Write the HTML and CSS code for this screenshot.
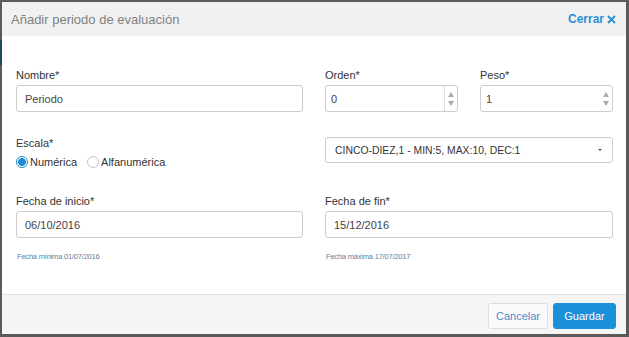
FILE: index.html
```html
<!DOCTYPE html>
<html lang="es">
<head>
<meta charset="utf-8">
<title>Añadir periodo de evaluación</title>
<link rel="stylesheet" href="styles.css">
</head>
<body>
<div class="modal">
  <div class="modal-header">
    <span class="modal-title">Añadir periodo de evaluación</span>
    <span class="close">Cerrar<svg class="close-x" width="9" height="9" viewBox="0 0 9 9"><path d="M1 1L8 8M8 1L1 8" stroke="#2b90d6" stroke-width="2" stroke-linecap="butt"/></svg></span>
  </div>
  <div class="modal-body">
    <div class="row">
      <div class="field wide">
        <label class="lbl">Nombre*</label>
        <div class="input">Periodo</div>
      </div>
      <div class="field narrow">
        <label class="lbl">Orden*</label>
        <div class="input num">0
          <span class="spin sep"><span class="up"></span><span class="down"></span></span>
        </div>
      </div>
      <div class="field narrow">
        <label class="lbl">Peso*</label>
        <div class="input num">1
          <span class="spin"><span class="up"></span><span class="down"></span></span>
        </div>
      </div>
    </div>
    <div class="row row2">
      <div class="field wide">
        <label class="lbl">Escala*</label>
        <div class="radios">
          <span class="radio checked"></span><span class="rlabel">Numérica</span>
          <span class="radio"></span><span class="rlabel">Alfanumérica</span>
        </div>
      </div>
      <div class="field double">
        <div class="input select">CINCO-DIEZ,1 - MIN:5, MAX:10, DEC:1<span class="caret"></span></div>
      </div>
    </div>
    <div class="row row3">
      <div class="field wide">
        <label class="lbl">Fecha de inicio*</label>
        <div class="input">06/10/2016</div>
        <div class="help">Fecha mínima 01/07/2016</div>
      </div>
      <div class="field double">
        <label class="lbl">Fecha de fin*</label>
        <div class="input">15/12/2016</div>
        <div class="help">Fecha máxima 17/07/2017</div>
      </div>
    </div>
  </div>
  <div class="modal-footer">
    <button class="btn btn-default">Cancelar</button>
    <button class="btn btn-primary">Guardar</button>
  </div>
</div>
</body>
</html>
```
FILE: styles.css
```css
html, body {
  margin: 0;
  padding: 0;
}
body {
  width: 629px;
  height: 337px;
  overflow: hidden;
  background: linear-gradient(#1d4a5c, #1d4a5c) 0 40px / 2px 25px no-repeat, #5a5a5a;
  font-family: "Liberation Sans", Arial, sans-serif;
  padding-top: 2px;
  box-sizing: border-box;
}
.modal {
  margin-left: 2px;
  width: 624px;
  height: 332px;
  background: #fff;
  display: flex;
  flex-direction: column;
}
.modal-header {
  height: 34px;
  background: #f1f1f1;
  display: flex;
  align-items: center;
  justify-content: space-between;
  padding: 0 10px 0 9px;
}
.modal-title {
  font-family: "Liberation Sans Narrow", "Liberation Sans", sans-serif;
  font-size: 13px;
  color: #7f7f84;
}
.close {
  font-size: 12px;
  font-weight: bold;
  color: #2b90d6;
  display: flex;
  align-items: center;
}
.close-x {
  margin-left: 3px;
  margin-top: 1px;
}
.modal-body {
  flex: 1;
  padding: 33px 13px 0 14px;
}
.row {
  display: flex;
  align-items: flex-start;
  column-gap: 22px;
}
.row2 { margin-top: 25px; }
.row3 { margin-top: 26px; }
.wide { width: 287px; }
.narrow { width: 133px; }
.double { width: 288px; }
.lbl {
  display: block;
  font-size: 11px;
  line-height: 13px;
  color: #333;
  margin-bottom: 3px;
}
.input {
  position: relative;
  box-sizing: border-box;
  height: 27px;
  border: 1px solid #ccc;
  border-radius: 3px;
  font-size: 11px;
  color: #444;
  padding-left: 8px;
  display: flex;
  align-items: center;
}
.num { padding-left: 5px; }
.select {
  height: 26px;
  color: #333;
  padding-left: 9px;
  font-size: 10.4px;
}
.caret {
  position: absolute;
  right: 10px;
  top: 11px;
  border-left: 2px solid transparent;
  border-right: 2px solid transparent;
  border-top: 2px solid #555;
}
.spin {
  position: absolute;
  right: 0;
  top: 0;
  bottom: 0;
  width: 12px;
  display: flex;
  flex-direction: column;
  align-items: center;
  justify-content: center;
  gap: 4px;
}
.spin.sep {
  border-left: 1px solid #ddd;
}
.up {
  border-left: 3px solid transparent;
  border-right: 3px solid transparent;
  border-bottom: 5px solid #a3acb4;
}
.down {
  border-left: 3px solid transparent;
  border-right: 3px solid transparent;
  border-top: 5px solid #a3acb4;
}
.radios {
  margin-top: 5px;
  height: 14px;
  display: flex;
  align-items: center;
  font-size: 11px;
  color: #333;
}
.radio {
  box-sizing: border-box;
  width: 12px;
  height: 12px;
  border-radius: 50%;
  border: 1px solid #c4c4c4;
  background: #fff;
}
.radio.checked {
  border: 1px solid #1b8ad3;
  background: radial-gradient(circle, #1b8ad3 0 3.6px, #fff 4.1px);
}
.rlabel { margin-left: 2px; margin-right: 10px; }
.help {
  margin-top: 14px;
  font-size: 7.5px;
  line-height: 9px;
  color: #61809f;
  letter-spacing: -0.2px;
  padding-left: 1px;
}
.modal-footer {
  height: 40px;
  border-top: 1px solid #e2e2e2;
  background: #f5f5f5;
  display: flex;
  justify-content: flex-end;
  align-items: flex-start;
  padding: 8px 10px 0 0;
  box-sizing: border-box;
  gap: 5px;
}
.btn {
  height: 26px;
  border-radius: 3px;
  font-family: "Liberation Sans", Arial, sans-serif;
  font-size: 11px;
  cursor: pointer;
}
.btn-default {
  width: 60px;
  background: #fafafa;
  border: 1px solid #ddd;
  color: #4a8fc9;
}
.btn-primary {
  width: 63px;
  background: #1a90d8;
  border: 1px solid #1a90d8;
  color: #fff;
}
```
